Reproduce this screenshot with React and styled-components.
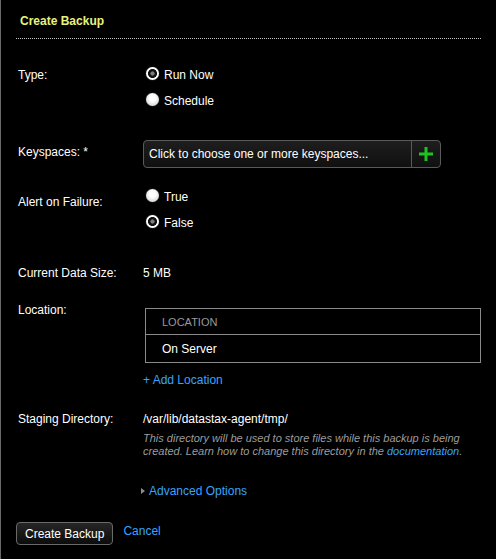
import React from "react";
import styled, { createGlobalStyle } from "styled-components";

const GlobalStyle = createGlobalStyle`
  html, body {
    margin: 0;
    padding: 0;
    background: #000;
  }
  body {
    font-family: "Liberation Sans", Arial, Helvetica, sans-serif;
    font-size: 12px;
    color: #fff;
  }
`;

const Panel = styled.div`
  min-height: 559px;
  border-left: 1px solid #6a6a6a;
  box-sizing: border-box;
  background: #000;
`;

const Header = styled.div`
  margin: 0 15px 0 15px;
  padding: 14px 4px 10px;
  border-bottom: 1px dotted #c8c8c8;
`;

const Title = styled.div`
  font-size: 12px;
  line-height: 14px;
  font-weight: bold;
  color: #e9f27c;
`;

const Body = styled.div`
  padding: 0 0 0 17px;
`;

const Row = styled.div`
  display: grid;
  grid-template-columns: 125px 1fr;
  margin-top: ${({ $top }) => $top}px;
`;

const Label = styled.div`
  line-height: 16px;
  padding-top: ${({ $pad }) => $pad || 0}px;
`;

const Control = styled.div`
  display: flex;
  flex-direction: column;
  align-items: flex-start;
`;

const RadioGroup = styled.div`
  display: flex;
  flex-direction: column;
  gap: 10px;
`;

const RadioOption = styled.label`
  display: flex;
  align-items: center;
  gap: 5px;
  height: 16px;
  line-height: 16px;
  margin-left: 3px;
`;

const RadioDot = styled.span`
  width: 13px;
  height: 13px;
  border-radius: 50%;
  box-sizing: border-box;
  background: ${({ $checked }) =>
    $checked
      ? "radial-gradient(circle at center, #7c7c7c 0 1.8px, #111 2.4px 4.2px, #fff 4.8px)"
      : "radial-gradient(circle at 50% 40%, #fff 0 3px, #e2e2e2 6.5px)"};
  box-shadow: 0 0 1px rgba(255, 255, 255, 0.6);
  margin-top: -3px;
`;

const SelectBox = styled.div`
  display: flex;
  width: 298px;
  height: 28px;
  box-sizing: border-box;
  border: 1px solid #5a5a5a;
  border-radius: 4px;
  background: linear-gradient(#1e1e1e, #101010);
  overflow: hidden;
`;

const SelectText = styled.div`
  flex: 1;
  padding-left: 5px;
  line-height: 26px;
  color: #fff;
`;

const AddButton = styled.div`
  width: 28px;
  border-left: 1px solid #5a5a5a;
  display: flex;
  align-items: center;
  justify-content: center;
`;

const Value = styled.div`
  line-height: 16px;
`;

const Table = styled.div`
  margin: 6px 0 0 2px;
  width: 336px;
  box-sizing: border-box;
  border: 1px solid #8a8a8a;
`;

const TableCell = styled.div`
  height: ${({ $head }) => ($head ? 25 : 27)}px;
  line-height: ${({ $head }) => ($head ? 27 : 28)}px;
  padding-left: 16px;
  font-size: ${({ $head }) => ($head ? 11 : 12)}px;
  color: ${({ $head }) => ($head ? "#9a9a9a" : "#fff")};
  border-bottom: ${({ $head }) => ($head ? "1px solid #8a8a8a" : "none")};
`;

const Link = styled.a`
  color: #35a5ff;
  text-decoration: none;
  cursor: pointer;
`;

const AddLocation = styled(Link)`
  display: block;
  margin-top: 9px;
  line-height: 16px;
`;

const Help = styled.div`
  margin-top: 5px;
  width: 336px;
  font-size: 11px;
  line-height: 13px;
  font-style: italic;
  color: #9c9c9c;
`;

const Advanced = styled.div`
  display: flex;
  align-items: center;
  gap: 4px;
  margin: 25px 0 0 123px;
  line-height: 16px;
`;

const Caret = styled.span`
  width: 0;
  height: 0;
  border-top: 3.5px solid transparent;
  border-bottom: 3.5px solid transparent;
  border-left: 4px solid #8c8c8c;
`;

const Footer = styled.div`
  display: flex;
  align-items: flex-start;
  gap: 10px;
  margin-top: 23px;
  padding-left: 15px;
`;

const Button = styled.button`
  height: 23px;
  padding: 0 8px;
  border: 1px solid #6a6a6a;
  border-radius: 4px;
  background: linear-gradient(#262626, #0c0c0c);
  color: #fff;
  font-family: inherit;
  font-size: 12px;
  cursor: pointer;
`;

const Cancel = styled(Link)`
  line-height: 16px;
  margin-top: 1px;
`;

const Radio = ({ checked, children }) => (
  <RadioOption>
    <RadioDot $checked={checked} />
    {children}
  </RadioOption>
);

const Plus = () => (
  <svg width="14" height="14" viewBox="0 0 14 14">
    <rect x="5.5" y="0" width="3" height="14" fill="#1fc21f" />
    <rect x="0" y="5.5" width="14" height="3" fill="#1fc21f" />
  </svg>
);

export default function App() {
  return (
    <>
      <GlobalStyle />
      <Panel>
        <Header>
          <Title>Create Backup</Title>
        </Header>
        <Body>
          <Row $top={28}>
            <Label>Type:</Label>
            <RadioGroup>
              <Radio checked>Run Now</Radio>
              <Radio>Schedule</Radio>
            </RadioGroup>
          </Row>

          <Row $top={31}>
            <Label $pad={4}>Keyspaces: *</Label>
            <Control>
              <SelectBox>
                <SelectText>Click to choose one or more keyspaces...</SelectText>
                <AddButton>
                  <Plus />
                </AddButton>
              </SelectBox>
            </Control>
          </Row>

          <Row $top={21}>
            <Label $pad={5}>Alert on Failure:</Label>
            <RadioGroup>
              <Radio>True</Radio>
              <Radio checked>False</Radio>
            </RadioGroup>
          </Row>

          <Row $top={34}>
            <Label>Current Data Size:</Label>
            <Value>5 MB</Value>
          </Row>

          <Row $top={21}>
            <Label>Location:</Label>
            <Control>
              <Table>
                <TableCell $head>LOCATION</TableCell>
                <TableCell>On Server</TableCell>
              </Table>
              <AddLocation>+ Add Location</AddLocation>
            </Control>
          </Row>

          <Row $top={23}>
            <Label>Staging Directory:</Label>
            <Control>
              <Value>/var/lib/datastax-agent/tmp/</Value>
              <Help>
                This directory will be used to store files while this backup is being
                created. Learn how to change this directory in the <Link>documentation</Link>.
              </Help>
            </Control>
          </Row>

          <Advanced>
            <Caret />
            <Link>Advanced Options</Link>
          </Advanced>
        </Body>
        <Footer>
          <Button>Create Backup</Button>
          <Cancel>Cancel</Cancel>
        </Footer>
      </Panel>
    </>
  );
}
